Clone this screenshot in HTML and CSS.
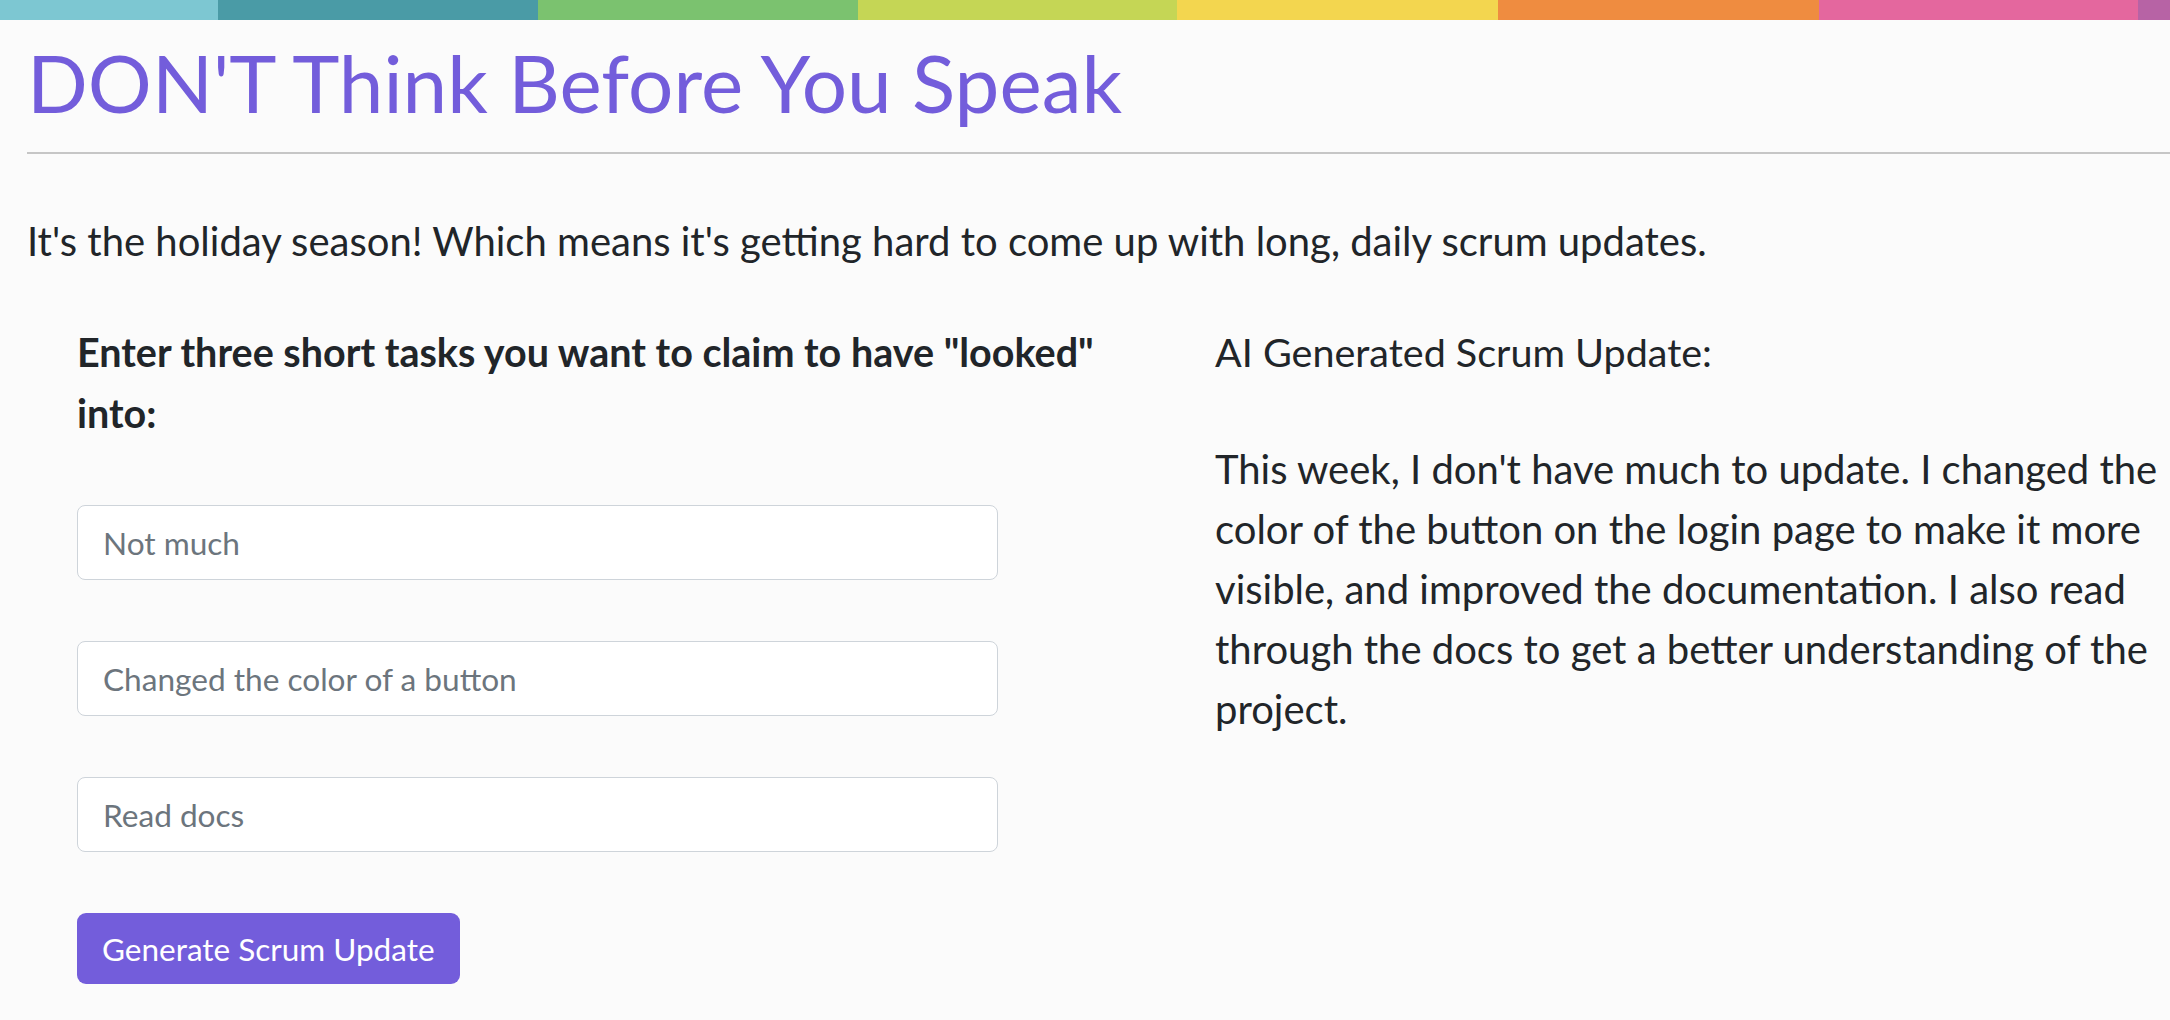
FILE: index.html
```html
<!DOCTYPE html>
<html lang="en">
<head>
<meta charset="utf-8">
<title>DON'T Think Before You Speak</title>
<link rel="stylesheet" href="styles.css">
</head>
<body>
<div class="rainbow"></div>
<main class="page">
  <h1 class="title">DON'T Think Before You Speak</h1>
  <hr class="rule">
  <p class="intro">It's the holiday season! Which means it's getting hard to come up with long, daily scrum updates.</p>
  <div class="columns">
    <section class="form-col">
      <h2 class="prompt">Enter three short tasks you want to claim to have "looked" into:</h2>
      <input class="task-input" type="text" placeholder="Not much">
      <input class="task-input" type="text" placeholder="Changed the color of a button">
      <input class="task-input" type="text" placeholder="Read docs">
      <button class="generate" type="button">Generate Scrum Update</button>
    </section>
    <section class="output-col">
      <p class="output-label">AI Generated Scrum Update:</p>
      <p class="output-text">This week, I don't have much to update. I changed the color of the button on the login page to make it more visible, and improved the documentation. I also read through the docs to get a better understanding of the project.</p>
    </section>
  </div>
</main>
</body>
</html>
```
FILE: styles.css
```css
html, body {
  margin: 0;
  padding: 0;
}
body {
  background: #fbfbfb;
  color: #212529;
  font-family: Lato, "Open Sans", sans-serif;
  overflow: hidden;
}
.rainbow {
  height: 20px;
  background: linear-gradient(to right,
    #7dc7d2 0 218px,
    #4a9ba6 218px 538px,
    #7bc26f 538px 858px,
    #c5d655 858px 1177px,
    #f3d64f 1177px 1498px,
    #ef8c40 1498px 1819px,
    #e4679e 1819px 2138px,
    #b763a5 2138px 100%);
}
.page {
  padding-left: 27px;
}
.title {
  margin: 14px 0 0;
  font-size: 80px;
  line-height: 96px;
  font-weight: 400;
  color: #735ddb;
}
.rule {
  margin: 22px 0 0;
  border: 0;
  border-top: 2px solid #c6c6c6;
  height: 0;
}
.intro {
  margin: 57px 0 0;
  font-size: 40px;
  line-height: 60px;
}
.columns {
  display: grid;
  grid-template-columns: 1088px 1fr;
  column-gap: 50px;
  padding-left: 50px;
  margin-top: 50px;
}
.prompt {
  margin: 0;
  font-size: 39.5px;
  line-height: 61px;
  font-weight: 700;
}
.task-input {
  display: block;
  box-sizing: border-box;
  width: 921px;
  height: 75px;
  margin-top: 61px;
  padding: 0 25px;
  border: 1px solid #ced4da;
  border-radius: 8px;
  background: #fff;
  font-family: inherit;
  font-size: 31.6px;
  color: #212529;
}
.form-col .prompt + .task-input {
  margin-top: 62px;
}
.task-input::placeholder {
  color: #6c757d;
  opacity: 1;
}
.generate {
  display: block;
  margin-top: 61px;
  height: 71px;
  padding: 0 25px;
  border: 0;
  border-radius: 9px;
  background: #735ddb;
  color: #fff;
  font-family: inherit;
  font-size: 31.5px;
}
.output-label {
  margin: 0;
  font-size: 39.5px;
  line-height: 61px;
}
.output-text {
  margin: 57px 0 0;
  font-size: 40px;
  line-height: 60px;
}
```
